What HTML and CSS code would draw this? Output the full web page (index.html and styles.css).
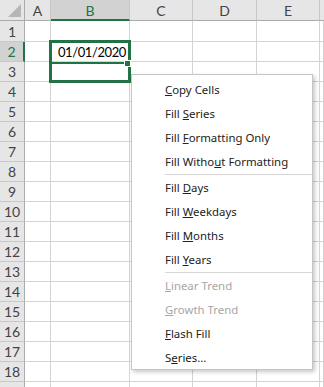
FILE: index.html
```html
<!doctype html>
<html>

<head>
    <meta charset="utf-8" />
    <link rel="stylesheet" href="styles.css">
</head>

<body>

    <div class="main">

        <div class="sheet">
            <div class="corner"><span class="tri"></span></div>
            <div class="col-head">A</div>
            <div class="col-head active">B</div>
            <div class="col-head">C</div>
            <div class="col-head">D</div>
            <div class="col-head">E</div>
            <div class="col-head last"></div>

            <div class="row-head">1</div><div class="cell"></div><div class="cell"></div><div class="cell"></div><div class="cell"></div><div class="cell"></div><div class="cell"></div>
            <div class="row-head active">2</div><div class="cell"></div><div class="cell date">01/01/2020</div><div class="cell"></div><div class="cell"></div><div class="cell"></div><div class="cell"></div>
            <div class="row-head">3</div><div class="cell"></div><div class="cell"></div><div class="cell"></div><div class="cell"></div><div class="cell"></div><div class="cell"></div>
            <div class="row-head">4</div><div class="cell"></div><div class="cell"></div><div class="cell"></div><div class="cell"></div><div class="cell"></div><div class="cell"></div>
            <div class="row-head">5</div><div class="cell"></div><div class="cell"></div><div class="cell"></div><div class="cell"></div><div class="cell"></div><div class="cell"></div>
            <div class="row-head">6</div><div class="cell"></div><div class="cell"></div><div class="cell"></div><div class="cell"></div><div class="cell"></div><div class="cell"></div>
            <div class="row-head">7</div><div class="cell"></div><div class="cell"></div><div class="cell"></div><div class="cell"></div><div class="cell"></div><div class="cell"></div>
            <div class="row-head">8</div><div class="cell"></div><div class="cell"></div><div class="cell"></div><div class="cell"></div><div class="cell"></div><div class="cell"></div>
            <div class="row-head">9</div><div class="cell"></div><div class="cell"></div><div class="cell"></div><div class="cell"></div><div class="cell"></div><div class="cell"></div>
            <div class="row-head">10</div><div class="cell"></div><div class="cell"></div><div class="cell"></div><div class="cell"></div><div class="cell"></div><div class="cell"></div>
            <div class="row-head">11</div><div class="cell"></div><div class="cell"></div><div class="cell"></div><div class="cell"></div><div class="cell"></div><div class="cell"></div>
            <div class="row-head">12</div><div class="cell"></div><div class="cell"></div><div class="cell"></div><div class="cell"></div><div class="cell"></div><div class="cell"></div>
            <div class="row-head">13</div><div class="cell"></div><div class="cell"></div><div class="cell"></div><div class="cell"></div><div class="cell"></div><div class="cell"></div>
            <div class="row-head">14</div><div class="cell"></div><div class="cell"></div><div class="cell"></div><div class="cell"></div><div class="cell"></div><div class="cell"></div>
            <div class="row-head">15</div><div class="cell"></div><div class="cell"></div><div class="cell"></div><div class="cell"></div><div class="cell"></div><div class="cell"></div>
            <div class="row-head">16</div><div class="cell"></div><div class="cell"></div><div class="cell"></div><div class="cell"></div><div class="cell"></div><div class="cell"></div>
            <div class="row-head">17</div><div class="cell"></div><div class="cell"></div><div class="cell"></div><div class="cell"></div><div class="cell"></div><div class="cell"></div>
            <div class="row-head">18</div><div class="cell"></div><div class="cell"></div><div class="cell"></div><div class="cell"></div><div class="cell"></div><div class="cell"></div>
            <div class="row-head"></div><div class="cell"></div><div class="cell"></div><div class="cell"></div><div class="cell"></div><div class="cell"></div><div class="cell"></div>
        </div>

        <!-- selection B2:B3 -->
        <div class="selection">
            <div class="divider"></div>
            <div class="handle"></div>
        </div>

        <!-- auto fill options -->
        <div class="menu">
            <div class="item"><u>C</u>opy Cells</div>
            <div class="item">Fill <u>S</u>eries</div>
            <div class="item">Fill <u>F</u>ormatting Only</div>
            <div class="item">Fill Witho<u>u</u>t Formatting</div>
            <div class="sep"></div>
            <div class="item">Fill <u>D</u>ays</div>
            <div class="item">Fill <u>W</u>eekdays</div>
            <div class="item">Fill <u>M</u>onths</div>
            <div class="item">Fill <u>Y</u>ears</div>
            <div class="sep"></div>
            <div class="item disabled"><u>L</u>inear Trend</div>
            <div class="item disabled"><u>G</u>rowth Trend</div>
            <div class="item"><u>F</u>lash Fill</div>
            <div class="item">S<u>e</u>ries...</div>
        </div>

    </div>

</body>

</html>
```

FILE: styles.css
```css
html,
body {
    margin: 0 0;
    height: 100%;
    overflow: hidden;
    background-color: white;
}

.main {
    position: relative;
    height: 100%;
}

.sheet {
    display: grid;
    grid-template-columns: 25px 26px 79px 63px 64px 63px 1fr;
    grid-template-rows: 21px 21px repeat(18, 20px);
    font-family: Lato, "Open Sans", sans-serif;
}

.sheet > div {
    box-sizing: border-box;
}

.corner {
    position: relative;
    background-color: #e6e6e6;
    border-right: 1px solid #ababab;
    border-bottom: 1px solid #ababab;
}

.corner .tri {
    position: absolute;
    right: 3px;
    bottom: 3px;
    width: 0;
    height: 0;
    border-left: 13px solid transparent;
    border-bottom: 13px solid #b6b6b6;
}

.col-head {
    display: flex;
    justify-content: center;
    align-items: center;
    background-color: #e6e6e6;
    border-right: 1px solid #c8c8c8;
    border-bottom: 1px solid #ababab;
    color: #444;
    font-size: 14px;
    padding-top: 1px;
}

.col-head.active {
    background-color: #d2d2d2;
    color: #217346;
    border-bottom: 2px solid #217346;
}

.col-head.last {
    border-right: none;
}

.row-head {
    display: flex;
    justify-content: center;
    align-items: center;
    background-color: #e6e6e6;
    border-right: 1px solid #ababab;
    border-bottom: 1px solid #c8c8c8;
    color: #444;
    font-size: 14px;
}

.row-head.active {
    background-color: #d2d2d2;
    color: #217346;
    border-right: 2px solid #217346;
}

.cell {
    border-right: 1px solid #d4d4d4;
    border-bottom: 1px solid #d4d4d4;
}

.cell.date {
    display: flex;
    justify-content: flex-end;
    align-items: center;
    padding-right: 3px;
    color: #000;
    font-size: 13px;
    letter-spacing: -0.4px;
}

.selection {
    position: absolute;
    left: 49px;
    top: 40px;
    width: 82px;
    height: 43px;
    box-sizing: border-box;
    border: 3px solid #217346;
}

.selection .divider {
    position: absolute;
    left: 0;
    top: 19px;
    width: 75px;
    height: 2px;
    background-color: #217346;
}

.selection .handle {
    position: absolute;
    right: -3px;
    top: 17px;
    width: 5px;
    height: 5px;
    background-color: #217346;
    border: 1px solid white;
}

.menu {
    position: absolute;
    left: 131px;
    top: 74px;
    width: 182px;
    height: 296px;
    box-sizing: border-box;
    padding: 3px 0 0 0;
    background-color: white;
    border: 1px solid #c6c6c6;
    box-shadow: 2px 2px 4px rgba(0, 0, 0, 0.22);
    font-family: "Noto Sans", sans-serif;
    font-size: 11.4px;
}

.menu .item {
    height: 24px;
    line-height: 24px;
    padding-left: 33px;
    color: #222;
    white-space: nowrap;
}

.menu .item.disabled {
    color: #a6a6a6;
}

.menu .sep {
    height: 1px;
    margin: 0 0 1px 33px;
    background-color: #d7d7d7;
}
```
